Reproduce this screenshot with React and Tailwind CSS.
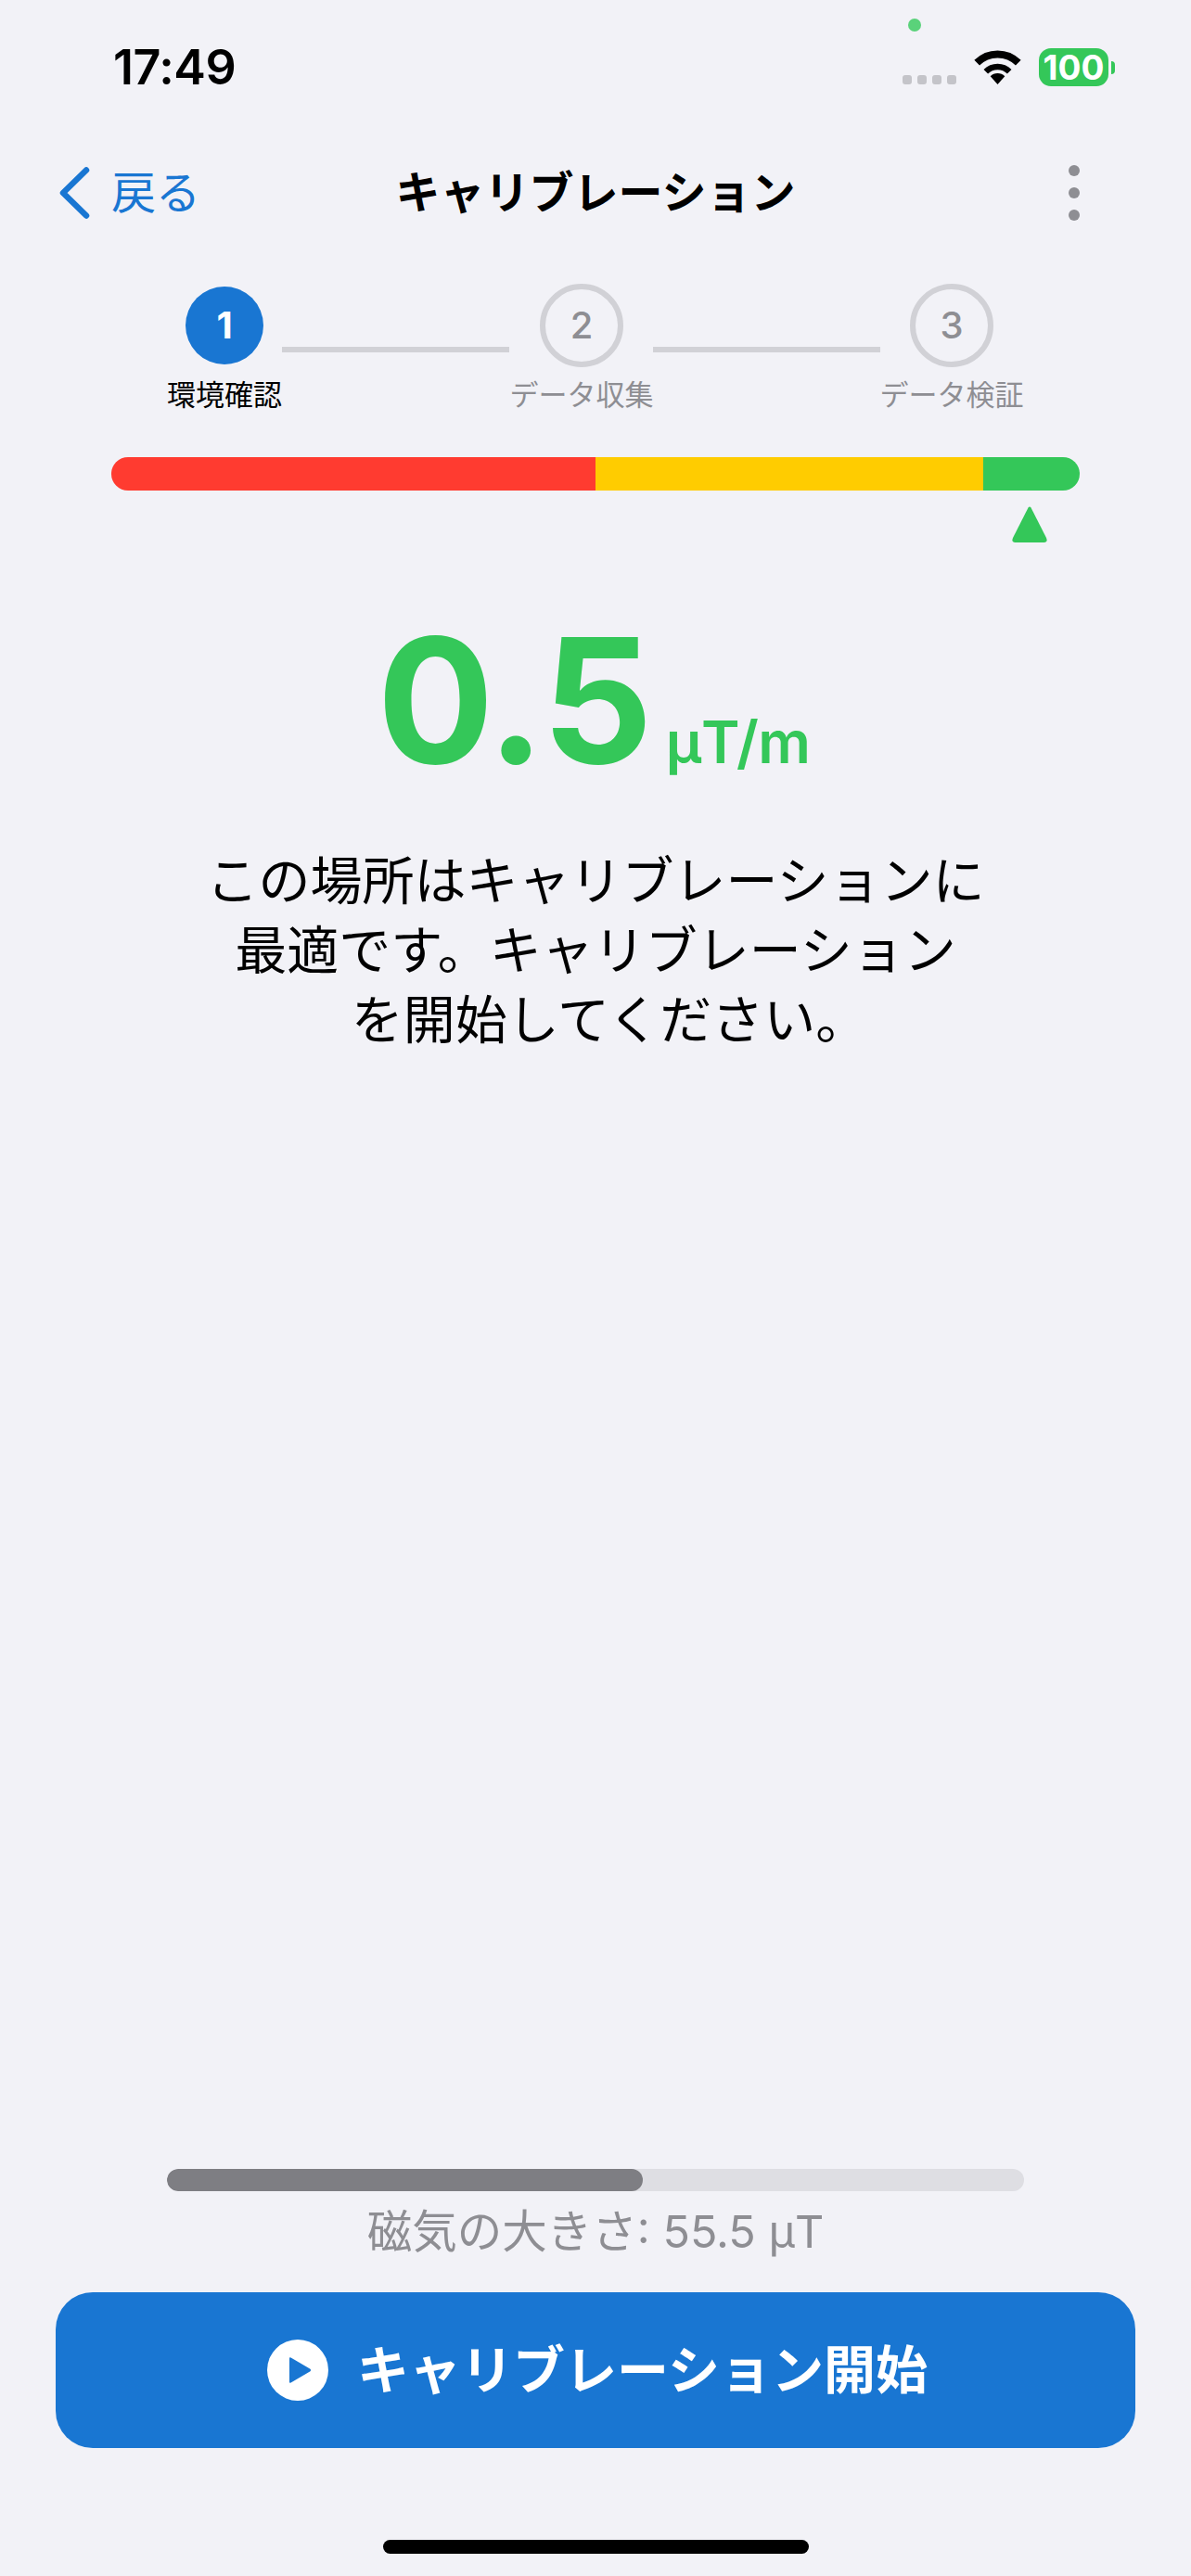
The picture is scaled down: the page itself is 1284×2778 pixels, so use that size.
import React from 'react';

const steps = [
  { num: '1', label: '環境確認', width: 'w-[122px]', active: true },
  { num: '2', label: 'データ収集', width: 'w-[152px]' },
  { num: '3', label: 'データ検証', width: 'w-[152px]' },
];

const WifiIcon = () => (
  <svg width="51" height="37" viewBox="0 0 51 37" fill="none">
    <path d="M3.2 13.7A31.5 31.5 0 0 1 47.8 13.7" stroke="#000" strokeWidth="8" />
    <path d="M12.8 23.3A18 18 0 0 1 38.2 23.3" stroke="#000" strokeWidth="6.5" />
    <path d="M25.5 37L17.7 28.2A11 11 0 0 1 33.3 28.2Z" fill="#000" />
  </svg>
);

const StatusBar = () => (
  <div className="relative h-[160px] shrink-0">
    <div className="absolute left-[979px] top-[20px] w-[14px] h-[14px] rounded-full bg-[#5ad27a]" />
    <div className="flex items-start pt-[52px] pl-[122px] pr-[82px]">
      <span className="text-[52px] leading-[41px] font-semibold text-black tracking-[-0.5px]">17:49</span>
      <div className="ml-auto flex items-start">
        <div className="flex gap-[6px] mt-[29px]">
          <div className="w-[10px] h-[10px] rounded-[3px] bg-[#c4c4c9]" />
          <div className="w-[10px] h-[10px] rounded-[3px] bg-[#c4c4c9]" />
          <div className="w-[10px] h-[10px] rounded-[3px] bg-[#c4c4c9]" />
          <div className="w-[10px] h-[10px] rounded-[3px] bg-[#c4c4c9]" />
        </div>
        <div className="ml-[19px] mt-[2px]"><WifiIcon /></div>
        <div className="ml-[19px] flex items-center">
          <div className="w-[75px] h-[41px] rounded-[13px] bg-[#34c759] text-white text-[37px] leading-[41px] font-bold text-center">100</div>
          <div className="ml-[3px] w-[4px] h-[14px] rounded-r-full bg-[#34c759]" />
        </div>
      </div>
    </div>
  </div>
);

const NavBar = () => (
  <div className="flex items-center h-[96px] px-[64px] shrink-0">
    <div className="flex-1 flex items-center">
      <svg width="34" height="56" viewBox="0 0 34 56" fill="none">
        <path d="M29 3.5L4 28L29 52.5" stroke="#1976d2" strokeWidth="6.5" strokeLinecap="round" strokeLinejoin="round" />
      </svg>
      <span className="ml-[22px] text-[48px] leading-none text-[#1976d2]">戻る</span>
    </div>
    <span className="text-[48px] leading-none font-bold text-black">キャリブレーション</span>
    <div className="flex-1 flex justify-end">
      <div className="flex flex-col gap-[12px] w-[12px] mr-[56px]">
        <div className="w-[12px] h-[12px] rounded-full bg-[#8e8e93]" />
        <div className="w-[12px] h-[12px] rounded-full bg-[#8e8e93]" />
        <div className="w-[12px] h-[12px] rounded-full bg-[#8e8e93]" />
      </div>
    </div>
  </div>
);

const Stepper = () => (
  <div className="flex items-start pl-[181px] pt-[50px] shrink-0">
    {steps.map((step, i) => (
      <React.Fragment key={step.num}>
        <div className={`flex flex-col items-center ${step.width}`}>
          <div className="h-[90px] flex items-center justify-center">
            {step.active ? (
              <div className="w-[84px] h-[84px] rounded-full bg-[#1976d2] text-white flex items-center justify-center text-[40px] font-bold leading-none">{step.num}</div>
            ) : (
              <div className="w-[90px] h-[90px] rounded-full border-[6px] border-[#d1d1d6] text-[#8e8e93] flex items-center justify-center text-[40px] font-medium leading-none">{step.num}</div>
            )}
          </div>
          <span className={`mt-[12px] text-[31px] leading-[36px] whitespace-nowrap ${step.active ? 'text-black' : 'text-[#8e8e93]'}`}>{step.label}</span>
        </div>
        {i < 2 && <div className={`w-[245px] h-[6px] mt-[68px] bg-[#d1d1d6] ${i === 0 ? 'ml-[1px] mr-[2px]' : 'ml-[1px] mr-[1px]'}`} />}
      </React.Fragment>
    ))}
  </div>
);

const Meter = () => (
  <div className="px-[120px] mt-[49px] shrink-0">
    <div className="flex h-[36px] rounded-[18px] overflow-hidden">
      <div className="w-[522px] bg-[#ff3b30]" />
      <div className="w-[418px] bg-[#ffcc00]" />
      <div className="flex-1 bg-[#34c759]" />
    </div>
    <div className="flex justify-end pr-[35px] mt-[17px]">
      <svg width="38" height="39" viewBox="0 0 38 39">
        <path d="M17.5 1.5Q19 -0.5 20.5 1.5L37 34Q39 39 34.5 39H3.5Q-1 39 1 34Z" fill="#34c759" />
      </svg>
    </div>
  </div>
);

export default function App() {
  return (
    <div className="w-[1284px] h-[2778px] bg-[#f2f2f7] flex flex-col font-['Inter','Noto_Sans_CJK_JP',sans-serif] overflow-hidden">
      <StatusBar />
      <NavBar />
      <Stepper />
      <Meter />
      <div className="flex items-baseline justify-center mt-[80px] pr-[4px] text-[#34c759] shrink-0">
        <span className="text-[187px] leading-[180px] font-bold tracking-[-2px]">0.5</span>
        <span className="ml-[16px] text-[63px] leading-none font-semibold tracking-[-0.5px]">μT/m</span>
      </div>
      <div className="mt-[68px] text-center text-[56px] leading-[75px] text-black shrink-0">
        <p>この場所はキャリブレーションに</p>
        <p>最適です。キャリブレーション</p>
        <p className="pl-[30px]">を開始してください。</p>
      </div>
      <div className="mt-auto flex flex-col items-center shrink-0">
        <div className="w-[924px] h-[24px] rounded-[12px] bg-[#dedee3] overflow-hidden">
          <div className="w-[513px] h-full rounded-[12px] bg-[#7e7e83]" />
        </div>
        <span className="mt-[14px] text-[48.5px] leading-[60px] text-[#8e8e93]">磁気の大きさ: 55.5 μT</span>
      </div>
      <div className="mx-[60px] mt-[35px] h-[168px] rounded-[40px] bg-[#1976d2] flex items-center justify-center gap-[31px] pl-[4px] shrink-0">
        <svg width="66" height="66" viewBox="0 0 66 66">
          <circle cx="33" cy="33" r="33" fill="#fff" />
          <path d="M24 20.5Q24 18.7 25.6 19.6L46.5 31.7Q48 33 46.5 34.3L25.6 46.4Q24 47.3 24 45.5Z" fill="#1976d2" />
        </svg>
        <span className="text-[56px] leading-none font-bold text-white">キャリブレーション開始</span>
      </div>
      <div className="mt-[99px] mb-[24px] mx-auto w-[459px] h-[15px] rounded-full bg-black shrink-0" />
    </div>
  );
}
